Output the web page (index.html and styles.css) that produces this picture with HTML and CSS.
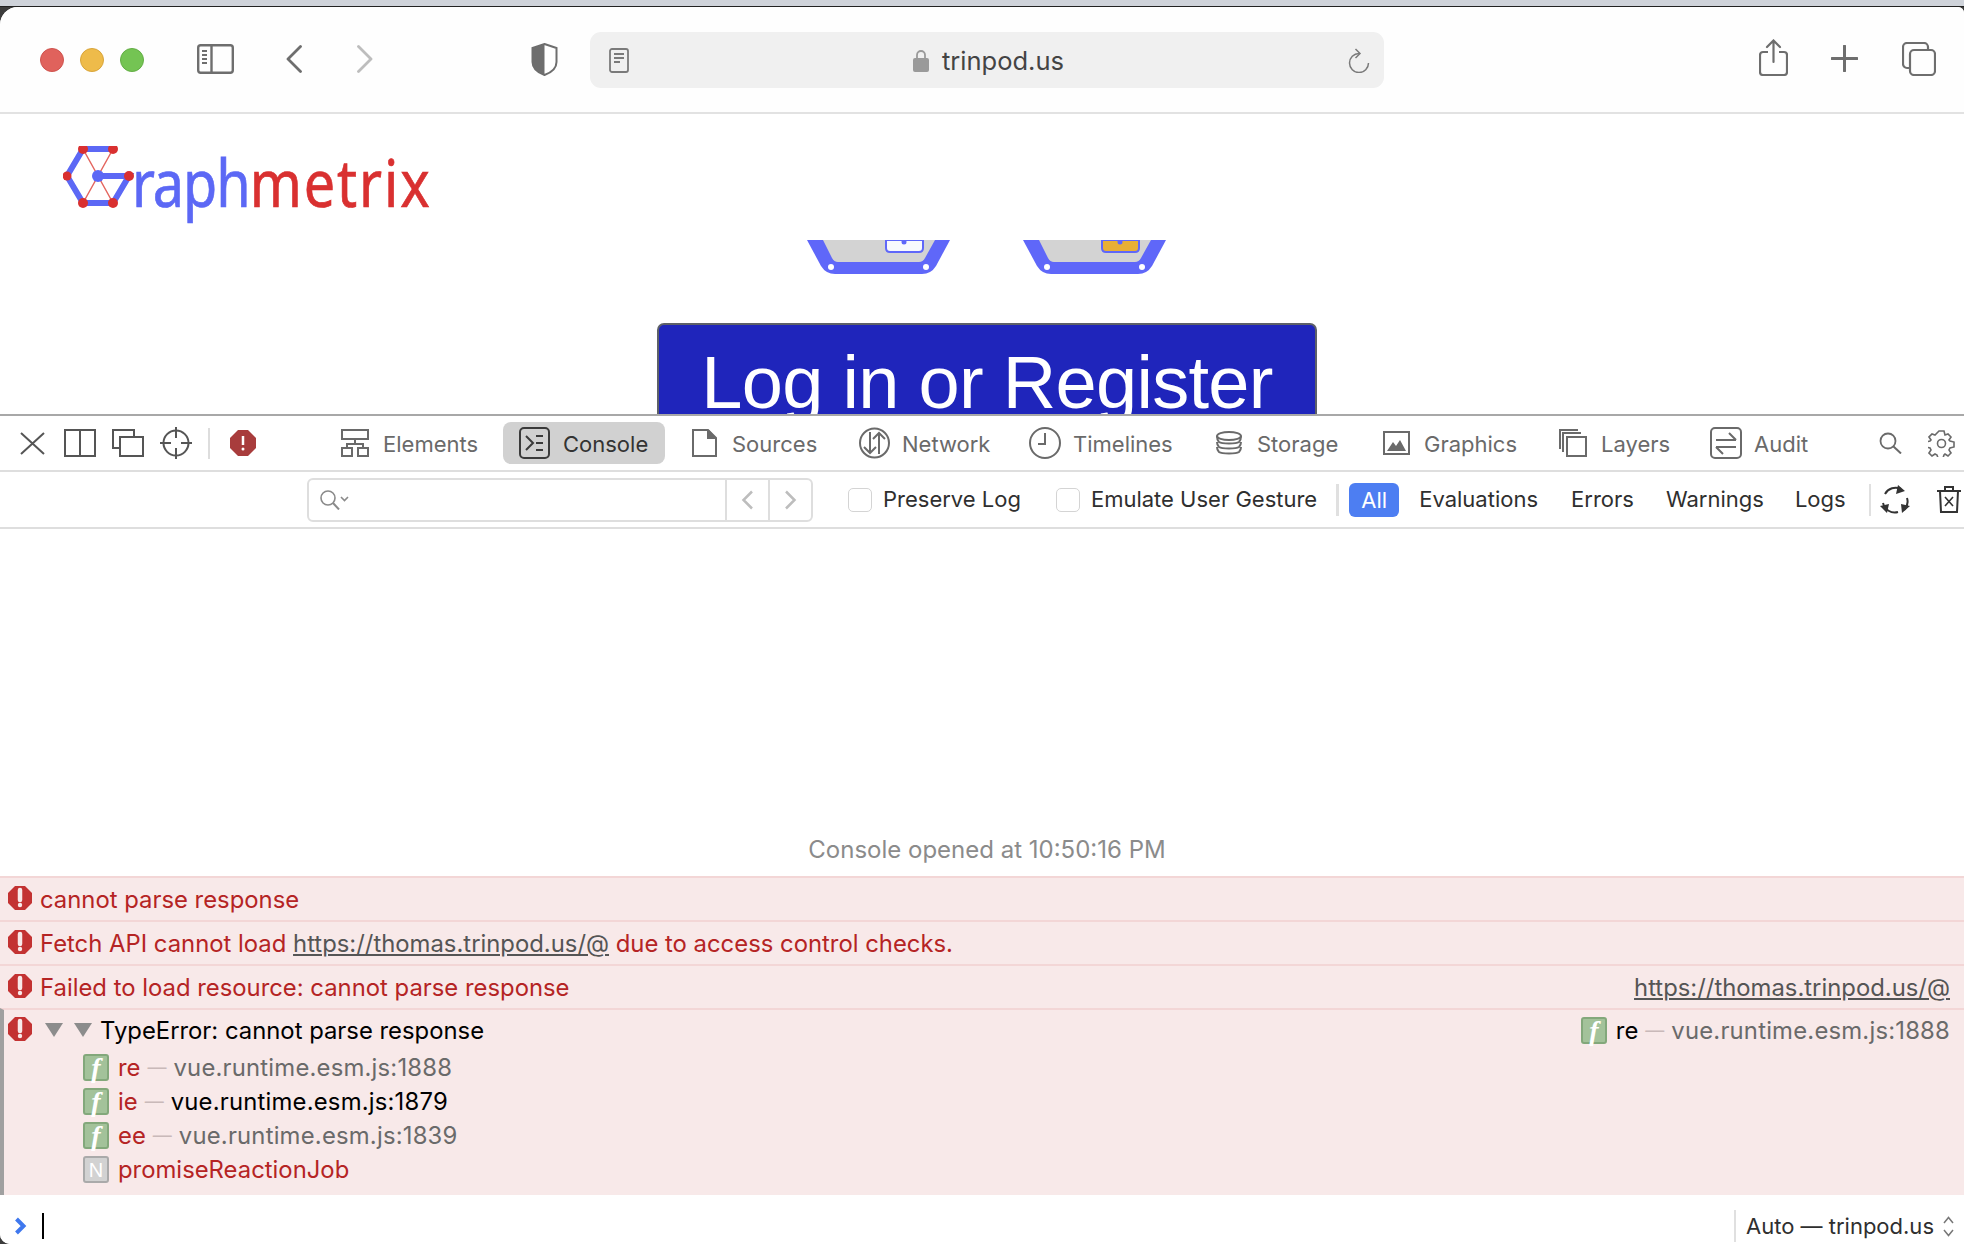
FILE: index.html
```html
<!DOCTYPE html>
<html lang="en">
<head>
<meta charset="utf-8">
<title>trinpod.us</title>
<link rel="stylesheet" href="styles.css">
</head>
<body>
<div class="strip"></div>
<div class="window">
  <header class="toolbar">
    <span class="light red"></span><span class="light yellow"></span><span class="light green"></span>
    <svg class="i-side" width="37" height="30" viewBox="0 0 37 30"><rect x="1.2" y="1.2" width="34.6" height="27.6" rx="2.5" fill="none" stroke="#6e6e6e" stroke-width="2.4"/><path d="M14.5 1v28" stroke="#6e6e6e" stroke-width="2.4"/><path d="M5 7h5M5 11h5M5 15h5M5 19h5" stroke="#6e6e6e" stroke-width="2"/></svg>
    <svg class="i-back" width="16" height="28" viewBox="0 0 16 28"><path d="M14.5 1.5 2 14l12.5 12.5" fill="none" stroke="#6e6e6e" stroke-width="2.8" stroke-linecap="round" stroke-linejoin="round"/></svg>
    <svg class="i-fwd" width="16" height="28" viewBox="0 0 16 28"><path d="M1.5 1.5 14 14 1.5 26.5" fill="none" stroke="#bdbdbd" stroke-width="2.8" stroke-linecap="round" stroke-linejoin="round"/></svg>
    <svg class="i-shield" width="27" height="33" viewBox="0 0 27 33"><path d="M13.5 1 25.5 5v14c0 6-5 10.500-12 13C6.500 29.500 1.500 25 1.500 19V5z" fill="#fff" stroke="#6e6e6e" stroke-width="2"/><path d="M13.500 1 1.500 5v14c0 6 5 10.500 12 13z" fill="#6e6e6e"/></svg>
    <div class="urlbar">
      <svg class="i-reader" width="20" height="25" viewBox="0 0 20 25"><rect x="1" y="1" width="18" height="23" rx="2" fill="none" stroke="#7a7a7a" stroke-width="1.800"/><path d="M5 6h10M5 10h10M5 14h6" stroke="#7a7a7a" stroke-width="1.800"/></svg>
      <div class="url-center">
        <svg width="16" height="23" viewBox="0 0 16 23"><path d="M4 10V6a4 4 0 0 1 8 0v4" fill="none" stroke="#9a9a9a" stroke-width="1.800"/><rect y="9" width="16" height="14" rx="2" fill="#9a9a9a"/></svg>
        <span class="url-text">trinpod.us</span>
      </div>
      <svg class="i-reload" width="22" height="25" viewBox="0 0 22 25"><path d="M11 5.500A9.500 9.500 0 1 0 20.500 15" fill="none" stroke="#7a7a7a" stroke-width="1.500"/><path d="M7.500 1 12 5.500 7.500 10" fill="none" stroke="#7a7a7a" stroke-width="1.500"/></svg>
    </div>
    <svg class="i-share" width="29" height="37" viewBox="0 0 29 37"><path d="M9 13H4a3 3 0 0 0-3 3v17a3 3 0 0 0 3 3h21a3 3 0 0 0 3-3V16a3 3 0 0 0-3-3h-5" fill="none" stroke="#6e6e6e" stroke-width="2.200"/><path d="M14.500 23V2M8 8l6.500-6.500L21 8" fill="none" stroke="#6e6e6e" stroke-width="2.200" stroke-linecap="round"/></svg>
    <svg class="i-plus" width="27" height="27" viewBox="0 0 27 27"><path d="M13.500 1v25M1 13.500h25" stroke="#6e6e6e" stroke-width="3" stroke-linecap="round"/></svg>
    <svg class="i-tabs" width="34" height="34" viewBox="0 0 34 34"><path d="M8 26H5a4 4 0 0 1-4-4V5a4 4 0 0 1 4-4h17a4 4 0 0 1 4 4v3" fill="none" stroke="#6e6e6e" stroke-width="2.200"/><rect x="8" y="8" width="25" height="25" rx="4" fill="none" stroke="#6e6e6e" stroke-width="2.200"/></svg>
  </header>

  <main class="page">
    <div class="brand">
      <svg class="brand-mark" width="72" height="74" viewBox="0 0 72 74">
        <path d="M20 3 50 57M50 3 20 57" stroke="#e4665f" stroke-width="1.500" fill="none"/>
        <path d="M20 3h30M20 3 4 30l16 27h30l16-27H35" fill="none" stroke="#5c68f5" stroke-width="6"/>
        <circle cx="35" cy="30" r="6" fill="#5c68f5"/>
        <g fill="#d93030"><circle cx="20" cy="3" r="5"/><circle cx="50" cy="3" r="5"/><circle cx="4" cy="30" r="4.500"/><circle cx="66" cy="30" r="5"/><circle cx="20" cy="57" r="5"/><circle cx="50" cy="57" r="5"/></g>
      </svg>
      <div class="brand-text"><span class="b-blue">raph</span><span class="b-red">metrix</span></div>
    </div>
    <div class="trays">
      <svg width="144" height="34" viewBox="0 0 144 34"><path d="M0 0 14 26Q19 34 28 34H115Q124 34 129 26L143 0z" fill="#5f67f9"/><path d="M16 0 25 18Q27 22 31 22H112Q116 22 118 18L128 0z" fill="#d3d3d3"/><path d="M79 0V8Q79 12 83 12H112Q116 12 116 8V0z" fill="#f8f9fd" stroke="#5f67f9" stroke-width="2"/><circle cx="97" cy="2" r="2.500" fill="#5f67f9"/><circle cx="24" cy="27" r="3" fill="#fff"/><circle cx="119" cy="27" r="3" fill="#fff"/></svg>
      <svg width="144" height="34" viewBox="0 0 144 34"><path d="M0 0 14 26Q19 34 28 34H115Q124 34 129 26L143 0z" fill="#5f67f9"/><path d="M16 0 25 18Q27 22 31 22H112Q116 22 118 18L128 0z" fill="#d3d3d3"/><path d="M79 0V8Q79 12 83 12H112Q116 12 116 8V0z" fill="#e8af35" stroke="#5f67f9" stroke-width="2"/><circle cx="97" cy="2" r="2.500" fill="#5f67f9"/><circle cx="24" cy="27" r="3" fill="#fff"/><circle cx="119" cy="27" r="3" fill="#fff"/></svg>
    </div>
    <div class="login">Log in or Register</div>
  </main>

  <section class="devtools">
    <nav class="tabbar">
      <div class="tools">
        <svg class="t-x" width="25" height="23" viewBox="0 0 25 23"><path d="M1 1l23 21M24 1 1 22" stroke="#555" stroke-width="2"/></svg>
        <svg width="32" height="28" viewBox="0 0 32 28"><rect x="1" y="1" width="30" height="26" fill="none" stroke="#555" stroke-width="2"/><path d="M16 1v26" stroke="#555" stroke-width="2"/></svg>
        <svg width="32" height="28" viewBox="0 0 32 28"><path d="M7 19H1V1h21v6" fill="none" stroke="#555" stroke-width="2"/><rect x="8" y="8" width="23" height="19" fill="none" stroke="#555" stroke-width="2"/></svg>
        <svg width="32" height="32" viewBox="0 0 32 32"><circle cx="16" cy="16" r="12.500" fill="none" stroke="#555" stroke-width="2"/><path d="M16 0v11M16 21v11M0 16h11M21 16h11" stroke="#555" stroke-width="2"/></svg>
        <span class="vsep"></span>
        <svg class="t-err" width="26" height="26" viewBox="0 0 26 26"><path d="M8 0h10l8 8v10l-8 8H8l-8-8V8z" fill="#a83c3c"/><path d="M13 6v9" stroke="#fff" stroke-width="2.500"/><circle cx="13" cy="19" r="1.500" fill="#fff"/></svg>
      </div>
      <div class="tabs">
        <div class="tab"><svg width="28" height="28" viewBox="0 0 28 28"><rect x="1" y="1" width="26" height="9" fill="none" stroke="#6a6a6a" stroke-width="2"/><rect x="1" y="19" width="10" height="8" fill="none" stroke="#6a6a6a" stroke-width="2"/><rect x="17" y="19" width="10" height="8" fill="none" stroke="#6a6a6a" stroke-width="2"/><path d="M14 10v5M6 19v-4h16v4" fill="none" stroke="#6a6a6a" stroke-width="2"/></svg><span>Elements</span></div>
        <div class="tab active"><svg width="31" height="32" viewBox="0 0 31 32"><rect x="1" y="1" width="29" height="30" rx="4" fill="none" stroke="#3a3a3a" stroke-width="2"/><path d="M7 9l7 7-7 7M17 9h7M17 16h7M17 23h7" fill="none" stroke="#3a3a3a" stroke-width="2"/></svg><span>Console</span></div>
        <div class="tab wide"><svg width="25" height="28" viewBox="0 0 25 28"><path d="M1 1h15l8 8v18H1z" fill="none" stroke="#6a6a6a" stroke-width="2"/><path d="M15 1h2l7 8v1h-9z" fill="#6a6a6a"/></svg><span>Sources</span></div>
        <div class="tab tight"><svg width="31" height="32" viewBox="0 0 31 32"><circle cx="15.500" cy="16" r="14.500" fill="none" stroke="#6a6a6a" stroke-width="2"/><path d="M11 5v21M5 20l6 6 6-6M20 27V7M14 12l6-6 6 6" fill="none" stroke="#6a6a6a" stroke-width="2"/></svg><span>Network</span></div>
        <div class="tab tight"><svg width="32" height="32" viewBox="0 0 32 32"><circle cx="16" cy="16" r="15" fill="none" stroke="#6a6a6a" stroke-width="2"/><path d="M16 6v11H9" fill="none" stroke="#6a6a6a" stroke-width="2"/></svg><span>Timelines</span></div>
        <div class="tab wide"><svg width="26" height="24" viewBox="0 0 26 24"><ellipse cx="13" cy="5" rx="12" ry="4" fill="none" stroke="#6a6a6a" stroke-width="2"/><path d="M1 5c0 2 0 4 2 6 3 2 17 2 20 0 2-2 2-4 2-6M1 11c0 2 0 3 2 5 3 2 17 2 20 0 2-2 2-3 2-5M1 16c0 2 0 3 2 5 3 2 17 2 20 0 2-2 2-3 2-5" fill="none" stroke="#6a6a6a" stroke-width="2"/></svg><span>Storage</span></div>
        <div class="tab"><svg width="27" height="24" viewBox="0 0 27 24"><rect x="1" y="1" width="25" height="22" fill="none" stroke="#6a6a6a" stroke-width="2"/><path d="M4 20l6-9 3 4 4-6 6 11z" fill="#6a6a6a"/></svg><span>Graphics</span></div>
        <div class="tab"><svg width="28" height="28" viewBox="0 0 28 28"><path d="M1 20V1h18M4 23V4h18" fill="none" stroke="#6a6a6a" stroke-width="2"/><rect x="8" y="8" width="19" height="19" fill="none" stroke="#6a6a6a" stroke-width="2"/></svg><span>Layers</span></div>
        <div class="tab tight"><svg width="32" height="32" viewBox="0 0 32 32"><rect x="1" y="1" width="30" height="30" rx="4" fill="none" stroke="#6a6a6a" stroke-width="2"/><path d="M6 13h20M19 6l7 7M26 20H6M13 27l-7-7" fill="none" stroke="#6a6a6a" stroke-width="2"/></svg><span>Audit</span></div>
      </div>
      <div class="tail-tools">
        <svg width="23" height="22" viewBox="0 0 23 22"><circle cx="9" cy="9" r="7.500" fill="none" stroke="#6a6a6a" stroke-width="1.800"/><path d="M14.500 14.500 22 21.500" stroke="#6a6a6a" stroke-width="2"/></svg>
        <svg width="27" height="27" viewBox="0 0 27 27"><path d="M11 1h5l1 4 3-1 3 3-2 3 1 1 4 1v5l-4 1-1 2 2 3-3 3-3-2-1 1-1 3h-5l-1-3-2-1-3 2-3-3 2-3-1-2-4-1v-5l4-1 1-1-2-3 3-3 3 1z" fill="none" stroke="#6a6a6a" stroke-width="1.600"/><circle cx="13.500" cy="13.500" r="4" fill="none" stroke="#6a6a6a" stroke-width="1.600"/></svg>
      </div>
    </nav>

    <div class="filterbar">
      <div class="search">
        <div class="search-input"><svg width="29" height="20" viewBox="0 0 29 20"><circle cx="8" cy="8" r="7" fill="none" stroke="#8a8a8a" stroke-width="1.600"/><path d="M13 13l6 6.500" stroke="#8a8a8a" stroke-width="2"/><path d="M21 7l3.500 3.500L28 7" fill="none" stroke="#8a8a8a" stroke-width="1.600"/></svg></div>
        <div class="search-nav"><svg width="13" height="20" viewBox="0 0 13 20"><path d="M11 1.500 2.500 10l8.500 8.500" fill="none" stroke="#bdbdbd" stroke-width="2.500"/></svg></div>
        <div class="search-nav"><svg width="13" height="20" viewBox="0 0 13 20"><path d="M2 1.500l8.500 8.500L2 18.500" fill="none" stroke="#bdbdbd" stroke-width="2.500"/></svg></div>
      </div>
      <label class="check c1"><span class="box"></span><span>Preserve Log</span></label>
      <label class="check c2"><span class="box"></span><span>Emulate User Gesture</span></label>
      <span class="fsep s1"></span>
      <span class="pill">All</span>
      <span class="flt f1">Evaluations</span>
      <span class="flt f2">Errors</span>
      <span class="flt f3">Warnings</span>
      <span class="flt f4">Logs</span>
      <span class="fsep s2"></span>
      <svg class="i-cycle" width="30" height="30" viewBox="0 0 30 30"><path d="M5 9a12 12 0 0 1 16-5M27 13a12 12 0 0 1-3 12M18 27A12 12 0 0 1 3 18" fill="none" stroke="#333" stroke-width="2"/><path d="M18 0l7 6-9 3zM30 21l-8 7-1-9zM0 21l9-2-2 9z" fill="#333"/></svg>
      <svg class="i-trash" width="24" height="27" viewBox="0 0 24 27"><path d="M3 5l1 21h16l1-21M0 5h24M8 5V1h8v4" fill="none" stroke="#333" stroke-width="2"/><path d="M8 11l8 9M16 11l-8 9" stroke="#333" stroke-width="1.600"/></svg>
    </div>

    <div class="log"><p class="opened">Console opened at 10:50:16 PM</p></div>

    <div class="messages">
      <div class="msg"><svg class="err" viewBox="0 0 24 24"><use href="#erricon"/></svg><span class="msg-text">cannot parse response</span></div>
      <div class="msg"><svg class="err" viewBox="0 0 24 24"><use href="#erricon"/></svg><span class="msg-text">Fetch API cannot load <a class="link">https://thomas.trinpod.us/@</a> due to access control checks.</span></div>
      <div class="msg"><svg class="err" viewBox="0 0 24 24"><use href="#erricon"/></svg><span class="msg-text">Failed to load resource: cannot parse response</span><a class="link right">https://thomas.trinpod.us/@</a></div>
      <div class="group">
        <div class="group-head">
          <svg class="err" viewBox="0 0 24 24"><use href="#erricon"/></svg>
          <span class="tri t1"></span><span class="tri t2"></span>
          <span class="g-title">TypeError: cannot parse response</span>
          <span class="right frame-right"><span class="fn">f</span><span class="fname dark">re</span><span class="dash">—</span><span class="src">vue.runtime.esm.js:1888</span></span>
        </div>
        <div class="frame"><span class="fn">f</span><span class="fname">re</span><span class="dash">—</span><span class="src">vue.runtime.esm.js:1888</span></div>
        <div class="frame"><span class="fn">f</span><span class="fname">ie</span><span class="dash">—</span><span class="src dark">vue.runtime.esm.js:1879</span></div>
        <div class="frame"><span class="fn">f</span><span class="fname">ee</span><span class="dash">—</span><span class="src">vue.runtime.esm.js:1839</span></div>
        <div class="frame"><span class="fn native">N</span><span class="fname">promiseReactionJob</span></div>
      </div>
    </div>

    <div class="prompt">
      <svg class="p-chev" width="13" height="18" viewBox="0 0 13 18"><path d="M2.500 2 9.500 9l-7 7" fill="none" stroke="#3f78ee" stroke-width="4"/></svg>
      <span class="caret"></span>
      <span class="ctx">Auto — trinpod.us</span>
      <svg class="updown" width="11" height="21" viewBox="0 0 11 21"><path d="M1 7l4.500-5.500L10 7M1 14l4.500 5.500L10 14" fill="none" stroke="#777" stroke-width="1.500"/></svg>
    </div>
  </section>
</div>
<svg class="defs" width="0" height="0"><defs><g id="erricon"><path d="M7 0h10l7 7v10l-7 7H7l-7-7V7z" fill="#c33232"/><path d="M12 4v10" stroke="#f8e9e9" stroke-width="4.500" stroke-linecap="round"/><circle cx="12" cy="19" r="2.200" fill="#f8e9e9"/></g></defs></svg>
</body>
</html>
```
FILE: styles.css
```css
* { box-sizing: border-box; }
html, body { margin: 0; height: 1244px; overflow: hidden; background: #3c3c3c; }
body { font-family: Inter, "Noto Sans", sans-serif; }
.defs { position: absolute; }
svg { display: block; flex: none; }
.strip { height: 7px; background: #cfd3da; border-bottom: 1px solid #222; }
.window { height: 1237px; background: #fff; border-radius: 18px 6px 0 10px; overflow: hidden; display: flex; flex-direction: column; }

.toolbar { height: 107px; flex: none; background: #fefefe; border-bottom: 2px solid #e2e2e2; display: flex; align-items: center; padding: 1px 0 0 40px; }
.light { width: 24px; height: 24px; border-radius: 50%; margin-right: 16px; flex: none; }
.red { background: #e0625c; border: 1px solid #cf534e; }
.yellow { background: #eebb4a; border: 1px solid #d9a53a; }
.green { background: #74c453; border: 1px solid #63ae45; margin-right: 0; }
.i-side { margin: -2px 0 0 53px; }
.i-back { margin: -2px 0 0 52px; }
.i-fwd { margin: -2px 0 0 55px; }
.i-shield { margin: -1px 0 0 158px; }
.urlbar { width: 794px; height: 56px; margin-left: 32px; background: #f0f0f0; border-radius: 11px; display: flex; align-items: center; padding: 0 14px 0 19px; }
.url-center { flex: 1; display: flex; align-items: center; justify-content: center; gap: 13px; }
.url-text { font-size: 25.500px; color: #444; line-height: 1; margin-top: 2px; }
.i-share { margin: -5px 0 0 375px; }
.i-plus { margin: -3px 0 0 43px; }
.i-tabs { margin: -2px 0 0 44px; }

.page { height: 300px; flex: none; background: #fff; overflow: hidden; }
.brand { height: 126px; display: flex; padding: 32px 0 0 63px; }
.brand-text { font-family: "Noto Sans", sans-serif; font-size: 65px; line-height: 74px; margin: -1px 0 0 -3px; transform: scaleX(.857); transform-origin: left top; white-space: nowrap; -webkit-text-stroke: .7px currentColor; }
.b-blue { color: #5c68f5; letter-spacing: -1.200px; }
.b-red { color: #d93030; letter-spacing: 2.200px; }
.trays { height: 34px; display: flex; justify-content: center; gap: 72px; padding-left: 10px; }
.login { width: 660px; height: 130px; margin: 49px 0 0 657px; background: #1f25bb; border: 2px solid #5d6068; border-radius: 7px; color: #fff; font-family: "Liberation Sans", sans-serif; font-size: 74px; letter-spacing: -.7px; line-height: 74px; text-align: center; padding-top: 21px; white-space: nowrap; }

.devtools { flex: 1; display: flex; flex-direction: column; border-top: 2px solid #a8a8a8; min-height: 0; }
.tabbar { height: 56px; flex: none; border-bottom: 2px solid #dedede; display: flex; align-items: center; padding-left: 20px; }
.tools { display: flex; align-items: center; gap: 16px; width: 305px; flex: none; }
.t-x { margin-right: 3px; }
.vsep { width: 2px; height: 31px; background: #ddd; }
.t-err { margin-left: 4px; }
.tabs { display: grid; flex: none; grid-template-columns: 178px 173px 167px 170px 187px 167px 176px 151px 146px; align-items: center; }
.tab { display: flex; align-items: center; gap: 14px; padding-left: 16px; font-size: 22px; color: #6a6a6a; height: 42px; white-space: nowrap; }
.tab span { margin-top: 2px; }
.tab.tight { gap: 12px; }
.tab.wide { gap: 15px; }
.tab.active { width: 162px; background: #d1d1d1; border-radius: 8px; color: #333; gap: 13px; }
.tail-tools { display: flex; align-items: center; gap: 26px; margin-left: 39px; flex: none; }

.filterbar { height: 57px; flex: none; border-bottom: 2px solid #dedede; display: flex; align-items: center; padding-left: 307px; font-size: 22px; color: #2f2f2f; }
.search { width: 506px; height: 44px; flex: none; display: flex; border: 2px solid #dedede; border-radius: 6px; }
.search-input { width: 416px; display: flex; align-items: center; padding-left: 11px; }
.search-nav { width: 43px; border-left: 2px solid #dedede; display: flex; align-items: center; justify-content: center; }
.check { display: flex; align-items: center; gap: 11px; white-space: nowrap; flex: none; }
.check span:last-child, .flt { margin-top: -2px; flex: none; }
.c1 { margin-left: 35px; }
.c2 { margin-left: 35px; }
.box { width: 24px; height: 24px; flex: none; border: 1.500px solid #d4d4d4; border-radius: 5px; background: #fff; }
.fsep { width: 3px; height: 32px; background: #e0e0e0; flex: none; }
.s1 { margin-left: 19px; }
.s2 { margin-left: 23px; width: 2px; }
.pill { width: 50px; height: 34px; flex: none; margin-left: 10px; background: #4d7ef2; color: #fff; border-radius: 6px; display: flex; align-items: center; justify-content: center; }
.f1 { margin-left: 20px; }
.f2 { margin-left: 33px; }
.f3 { margin-left: 32px; }
.f4 { margin-left: 31px; }
.i-cycle { margin-left: 9px; }
.i-trash { margin-left: 27px; }

.log { flex: 1; min-height: 0; display: flex; align-items: flex-end; justify-content: center; padding-left: 10px; }
.opened { margin: 0 0 11px; font-size: 24px; line-height: 30px; color: #8b8b8b; }

.messages { flex: none; background: #f8e9e9; font-size: 23.850px; color: #b52424; }
.msg { height: 44px; border-top: 2px solid #f3d6d6; display: flex; align-items: center; padding: 0 14px 0 8px; white-space: nowrap; }
.err { width: 24px; height: 24px; flex: none; margin-top: -2px; }
.msg-text { margin-left: 8px; }
.link { color: #555; text-decoration: underline; }
.right { margin-left: auto; }
.group { height: 187px; border-top: 2px solid #f3d6d6; border-left: 4px solid #a0a0a0; padding-left: 4px; }
.group-head { height: 40px; display: flex; align-items: center; padding-right: 14px; white-space: nowrap; }
.tri { width: 0; height: 0; border-left: 9px solid transparent; border-right: 9px solid transparent; border-top: 14px solid #8c8c8c; flex: none; }
.t1 { margin-left: 13px; }
.t2 { margin-left: 11px; }
.g-title { color: #000; margin-left: 8px; }
.frame-right { display: flex; align-items: center; }
.frame { height: 34px; display: flex; align-items: center; padding-left: 75px; white-space: nowrap; }
.fn { width: 26px; height: 27px; flex: none; background: #a3c29a; border: 2px solid #83a87b; border-radius: 3px; color: #fff; font-family: "Liberation Serif", serif; font-style: italic; font-weight: 700; font-size: 28px; line-height: 24px; text-align: center; }
.fn.native { background: #d2d2d2; border-color: #aaa; font-family: "Liberation Sans", sans-serif; font-style: normal; font-weight: 400; font-size: 20px; }
.fname { margin-left: 9px; }
.dash { color: #c9b9b9; margin: 0 7px; font-size: 19px; }
.src { color: #6a6a6a; letter-spacing: .2px; }
.dark { color: #000; }

.prompt { height: 49px; flex: none; background: #fff; display: flex; align-items: center; padding: 13px 10px 0 14px; font-size: 22px; color: #2f2f2f; }
.caret { width: 2px; height: 26px; background: #000; margin-left: 15px; }
.ctx { margin-left: auto; border-left: 2px solid #e0e0e0; padding-left: 10px; line-height: 32px; }
.updown { margin-left: 9px; }
```
